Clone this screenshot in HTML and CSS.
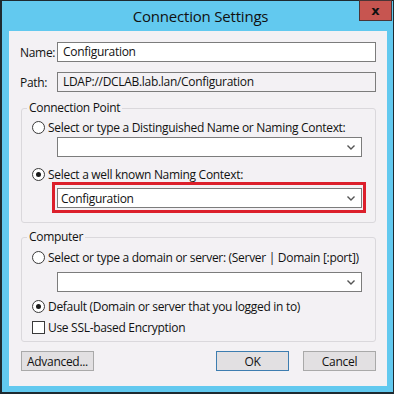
FILE: index.html
```html
<!DOCTYPE html>
<html lang="en">
<head>
    <meta charset="UTF-8">
    <meta name="viewport" content="width=device-width, initial-scale=1.0">
    <title>Connection Settings</title>
    <link rel="stylesheet" href="styles.css">
</head>
<body>
    <div class="window">
        <div class="titlebar">
            <span></span>
            <h1 class="title">Connection Settings</h1>
            <button class="close-btn">x</button>
        </div>

        <div class="dialog">
            <div class="field-row">
                <label class="field-label">Name:</label>
                <div class="textbox">Configuration</div>
            </div>
            <div class="field-row">
                <label class="field-label">Path:</label>
                <div class="textbox readonly">LDAP://DCLAB.lab.lan/Configuration</div>
            </div>

            <div class="group group-point">
                <span class="group-title">Connection Point</span>
                <div class="option first">
                    <span class="radio"></span>
                    <span class="option-text">Select or type a Distinguished Name or Naming Context:</span>
                </div>
                <div class="combo combo-dn">
                    <span class="combo-text"></span>
                    <svg class="chevron" width="8" height="5" viewBox="0 0 8 5"><polyline points="0.5,0.5 4,4 7.5,0.5" fill="none" stroke="#555" stroke-width="1.4"/></svg>
                </div>
                <div class="option second">
                    <span class="radio checked"></span>
                    <span class="option-text">Select a well known Naming Context:</span>
                </div>
                <div class="highlight">
                    <div class="combo">
                        <span class="combo-text">Configuration</span>
                        <svg class="chevron" width="8" height="5" viewBox="0 0 8 5"><polyline points="0.5,0.5 4,4 7.5,0.5" fill="none" stroke="#555" stroke-width="1.4"/></svg>
                    </div>
                </div>
            </div>

            <div class="group group-computer">
                <span class="group-title">Computer</span>
                <div class="option first">
                    <span class="radio"></span>
                    <span class="option-text">Select or type a domain or server: (Server | Domain [:port])</span>
                </div>
                <div class="combo combo-server">
                    <span class="combo-text"></span>
                    <svg class="chevron" width="8" height="5" viewBox="0 0 8 5"><polyline points="0.5,0.5 4,4 7.5,0.5" fill="none" stroke="#555" stroke-width="1.4"/></svg>
                </div>
                <div class="option second">
                    <span class="radio checked"></span>
                    <span class="option-text">Default (Domain or server that you logged in to)</span>
                </div>
                <div class="option third">
                    <span class="checkbox"></span>
                    <span class="option-text">Use SSL-based Encryption</span>
                </div>
            </div>

            <div class="buttons">
                <button class="btn">Advanced...</button>
                <span class="spacer"></span>
                <button class="btn default">OK</button>
                <button class="btn">Cancel</button>
            </div>
        </div>
    </div>
</body>
</html>
```

FILE: styles.css
```css
/* Reset */
* {
    margin: 0;
    padding: 0;
    box-sizing: border-box;
}

body {
    font-family: 'Open Sans', 'Noto Sans', sans-serif;
    font-size: 12px;
    letter-spacing: -0.3px;
    color: #111;
    background: #1b1b1b;
}

/* Moldura da janela */
.window {
    width: 394px;
    height: 394px;
    background: #62c9ef;
    border: 1px solid #1e2a30;
    border-left-width: 2px;
    border-bottom-width: 2px;
    padding: 0 6px 6px 7px;
    display: flex;
    flex-direction: column;
}

.titlebar {
    height: 30px;
    display: grid;
    grid-template-columns: 1fr auto 1fr;
    margin-right: -5px;
}

.title {
    font-size: 15px;
    font-weight: 400;
    line-height: 30px;
    color: #111;
    letter-spacing: -0.2px;
}

.close-btn {
    justify-self: end;
    align-self: start;
    width: 33px;
    height: 21px;
    margin-top: -1px;
    background: #c75550;
    border: 1px solid #4a3536;
    color: #111;
    font-family: 'DejaVu Sans', sans-serif;
    font-size: 13px;
    font-weight: bold;
    line-height: 16px;
    letter-spacing: 0;
}

/* Corpo do diálogo */
.dialog {
    flex: 1;
    background: #f3f1f4;
    padding: 11px 11px 0 11px;
    display: flex;
    flex-direction: column;
}

.field-row {
    display: flex;
    align-items: center;
    height: 20px;
}

.field-row + .field-row {
    margin-top: 10px;
}

.field-label {
    width: 37px;
    flex-shrink: 0;
}

.textbox {
    flex: 1;
    height: 20px;
    border: 1px solid #7c7c7c;
    background: #fff;
    padding: 0 5px;
    line-height: 18px;
}

.textbox.readonly {
    background: #f3f1f4;
}

/* Grupos */
.group {
    border: 1px solid #dad8dc;
    border-radius: 3px;
    margin-left: 1px;
    padding: 0 13px 0 10px;
    display: flex;
    flex-direction: column;
    align-items: stretch;
}

.group-title {
    align-self: flex-start;
    line-height: 16px;
    padding: 0 2px;
    margin: -9px 0 0 -5px;
    background: #f3f1f4;
}

.group-point {
    margin-top: 16px;
    padding-bottom: 9px;
}

.group-computer {
    margin-top: 14px;
    padding-bottom: 6px;
}

.option {
    display: flex;
    align-items: center;
    height: 16px;
    gap: 3px;
}

.option-text {
    white-space: nowrap;
}

.group-point .option.first { margin-top: 3px; }
.group-point .option.second { margin-top: 9px; }
.group-computer .option.first { margin-top: 4px; }
.group-computer .option.second { margin-top: 6px; }
.group-computer .option.third { margin-top: 5px; }

.radio {
    flex-shrink: 0;
    width: 13px;
    height: 13px;
    border: 1px solid #3a3a3a;
    border-radius: 50%;
    background: #fff;
    display: flex;
    align-items: center;
    justify-content: center;
}

.radio.checked::after {
    content: '';
    width: 5px;
    height: 5px;
    border-radius: 50%;
    background: #1a1a1a;
}

.checkbox {
    flex-shrink: 0;
    width: 13px;
    height: 13px;
    border: 1px solid #3a3a3a;
    background: #fff;
}

.combo {
    height: 20px;
    border: 1px solid #7c7c7c;
    background: #fff;
    display: flex;
    align-items: center;
    padding: 0 6px 0 3px;
}

.combo-text {
    flex: 1;
}

.combo-dn {
    margin: 2px 0 0 25px;
}

.combo-server {
    margin: 7px 0 0 25px;
}

/* Destaque vermelho */
.highlight {
    margin: 0 -4px 0 20px;
    border: 3px solid #dc1f2b;
    padding: 3px 1px 2px 2px;
}

/* Botões */
.buttons {
    display: flex;
    margin-top: 9px;
    margin-left: 1px;
    gap: 14px;
}

.spacer {
    flex: 1;
}

.btn {
    width: 73px;
    height: 20px;
    background: #e2e0e2;
    border: 1px solid #a9a9a9;
    font-family: inherit;
    font-size: 12px;
    letter-spacing: -0.3px;
    color: #111;
}

.btn.default {
    border-color: #3d7db0;
}
```
